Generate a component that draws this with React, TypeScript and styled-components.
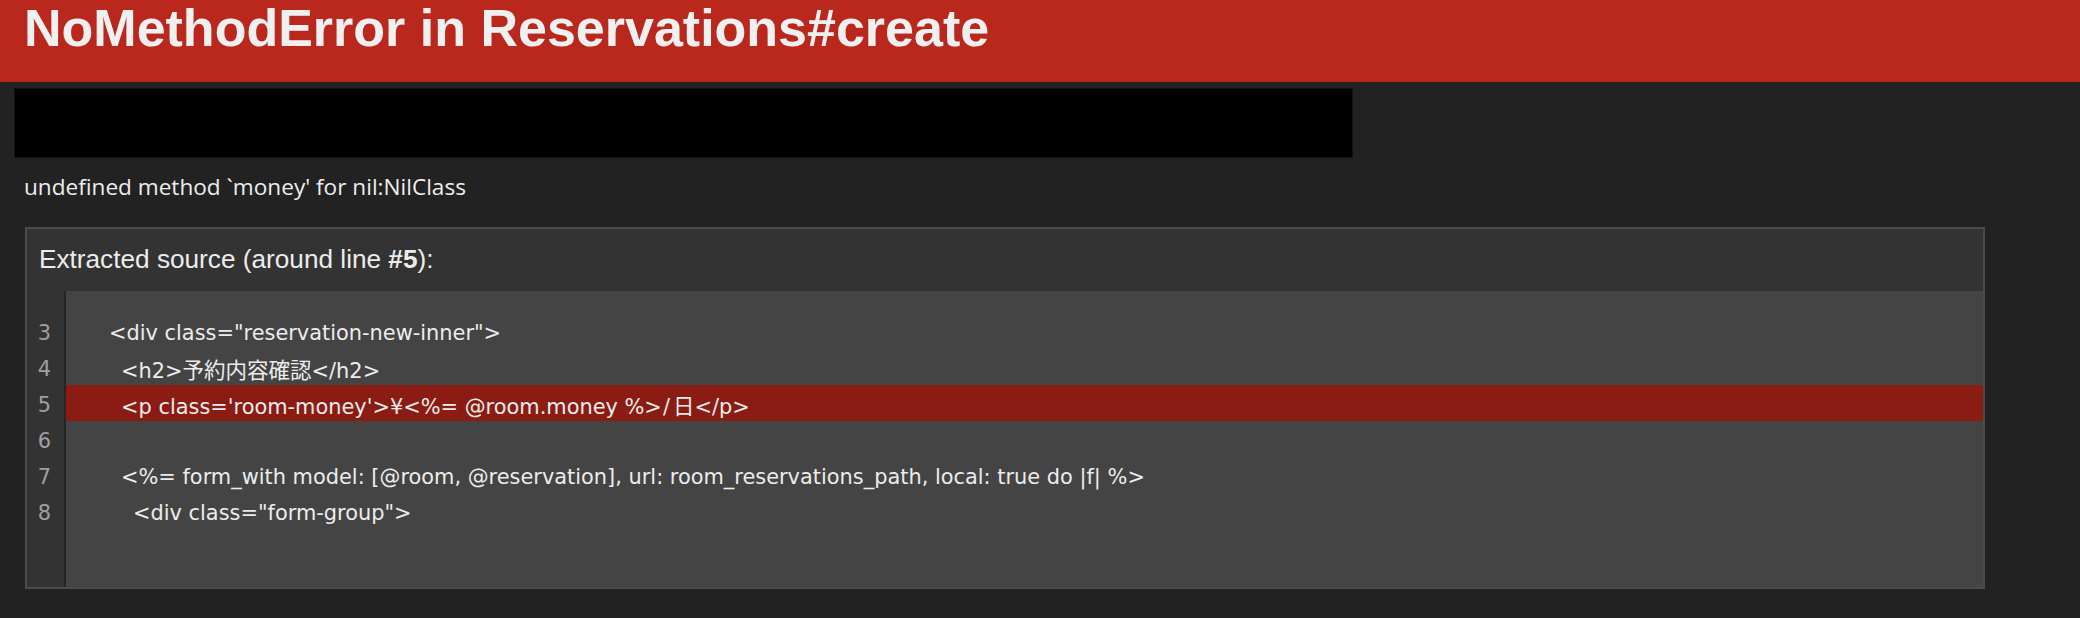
import React from "react";
import styled, { createGlobalStyle } from "styled-components";

const GlobalStyle = createGlobalStyle`
  html, body {
    margin: 0;
    padding: 0;
    background: #222222;
    color: #ececec;
  }
  body {
    font-family: "Liberation Sans", Arial, sans-serif;
  }
`;

const Page = styled.div`
  width: 2080px;
  min-height: 618px;
  background: #222222;
  display: flex;
  flex-direction: column;
`;

const Header = styled.header`
  background: #ba281d;
  color: #f0f0f0;
  height: 82px;
  box-sizing: border-box;
  padding: 0 24px;
`;

const Title = styled.h1`
  margin: 0;
  font-family: "Liberation Sans", Arial, sans-serif;
  font-weight: 700;
  font-size: 52px;
  line-height: 57px;
`;

const Main = styled.main`
  display: flex;
  flex-direction: column;
  align-items: flex-start;
`;

const Redacted = styled.div`
  margin: 6px 0 0 14px;
  width: 1339px;
  height: 70px;
  box-sizing: border-box;
  background: #000000;
  border: 1px solid #121212;
`;

const Message = styled.div`
  margin-top: 14px;
  padding-left: 24px;
  font-family: "Open Sans", "Noto Sans", sans-serif;
  font-size: 22.6px;
  line-height: 30px;
  color: #ededed;
`;

const Panel = styled.section`
  margin: 25px 0 0 25px;
  width: 1960px;
  box-sizing: border-box;
  border: 2px solid #4b4b4b;
  display: flex;
  flex-direction: column;
`;

const PanelHeader = styled.div`
  background: #333333;
  padding: 15px 12px 17px;
  font-family: "Liberation Sans", Arial, sans-serif;
  font-size: 26.2px;
  line-height: 30px;
  color: #ececec;
`;

const CodeBody = styled.div`
  display: flex;
  background: #444444;
  font-family: "DejaVu Sans", "Noto Sans CJK JP", sans-serif;
  font-size: 20.9px;
`;

const Gutter = styled.div`
  width: 37px;
  box-sizing: content-box;
  background: #333333;
  border-right: 2px solid #262626;
  padding: 22px 0 58px;
  display: flex;
  flex-direction: column;
  align-items: flex-end;
`;

const LineNo = styled.div`
  height: 36px;
  box-sizing: border-box;
  padding: 2px 13px 0 0;
  line-height: 36px;
  color: #a0a0a0;
`;

const Lines = styled.div`
  flex: 1;
  padding: 22px 0 58px;
  display: flex;
  flex-direction: column;
`;

const Line = styled.div<{ $indent: number; $active?: boolean }>`
  height: 36px;
  box-sizing: border-box;
  padding: 2px 0 0 ${(p) => p.$indent}px;
  line-height: 36px;
  white-space: pre;
  color: #ececec;
  background: ${(p) => (p.$active ? "#8b1c13" : "transparent")};
`;

const CJK = styled.span`
  font-family: "Noto Sans CJK JP", sans-serif;
  font-size: 21.5px;
`;

const Slash = styled.span`
  padding: 0 3px 0 1px;
`;

const lines: { no: number; indent: number; text: React.ReactNode; active?: boolean }[] = [
  { no: 3, indent: 43, text: '<div class="reservation-new-inner">' },
  {
    no: 4,
    indent: 55,
    text: (
      <>
        {"<h2>"}
        <CJK>予約内容確認</CJK>
        {"</h2>"}
      </>
    ),
  },
  {
    no: 5,
    indent: 55,
    active: true,
    text: (
      <>
        {"<p class='room-money'>¥<%= @room.money %>"}
        <Slash>/</Slash>
        <CJK>日</CJK>
        {"</p>"}
      </>
    ),
  },
  { no: 6, indent: 55, text: "" },
  {
    no: 7,
    indent: 55,
    text: "<%= form_with model: [@room, @reservation], url: room_reservations_path, local: true do |f| %>",
  },
  { no: 8, indent: 67, text: '<div class="form-group">' },
];

export default function App() {
  return (
    <Page>
      <GlobalStyle />
      <Header>
        <Title>NoMethodError in Reservations#create</Title>
      </Header>
      <Main>
        <Redacted />
        <Message>undefined method `money' for nil:NilClass</Message>
        <Panel>
          <PanelHeader>
            Extracted source (around line <b>#5</b>):
          </PanelHeader>
          <CodeBody>
            <Gutter>
              {lines.map((l) => (
                <LineNo key={l.no}>{l.no}</LineNo>
              ))}
            </Gutter>
            <Lines>
              {lines.map((l) => (
                <Line key={l.no} $indent={l.indent} $active={l.active}>
                  {l.text}
                </Line>
              ))}
            </Lines>
          </CodeBody>
        </Panel>
      </Main>
    </Page>
  );
}
